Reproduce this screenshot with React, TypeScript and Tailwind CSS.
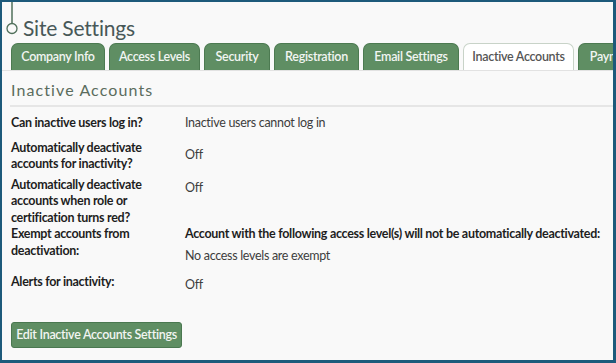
import React from 'react';

const tabs: { name: string; w: string }[] = [
  { name: 'Company Info', w: 'w-[94px]' },
  { name: 'Access Levels', w: 'w-[91px]' },
  { name: 'Security', w: 'w-[66px]' },
  { name: 'Registration', w: 'w-[85px]' },
  { name: 'Email Settings', w: 'w-[96px]' },
  { name: 'Inactive Accounts', w: 'w-[111px]' },
  { name: 'Payment', w: 'w-[70px]' },
];

const Row: React.FC<{ label: React.ReactNode; children: React.ReactNode; valueTop?: string; className?: string }> = ({
  label,
  children,
  valueTop = 'pt-[3px]',
  className = '',
}) => (
  <div className={`flex ${className}`}>
    <div className="w-[174px] shrink-0 font-bold text-[#1e1e1e] leading-[16.5px]">{label}</div>
    <div className={`text-[#3d3d3d] leading-[16px] ${valueTop}`}>{children}</div>
  </div>
);

export default function App() {
  return (
    <div className="relative w-[616px] h-[363px] overflow-hidden bg-[#f9f9f9] border-t-2 border-l-2 border-r-[3px] border-b-[3px] border-[#1d5a7b] font-['Lato',sans-serif] text-[12.5px] tracking-[-0.3px]">
      {/* timeline marker */}
      <svg className="absolute left-[3px] top-0" width="16" height="40" viewBox="0 0 16 40">
        <line x1="7" y1="0" x2="7" y2="21" stroke="#4f6f5a" strokeWidth="1.5" />
        <circle cx="7" cy="26.5" r="5" fill="none" stroke="#4f6f5a" strokeWidth="1.3" />
      </svg>

      <h1 className="pl-[21px] pt-[12px] text-[21px] leading-[28px] text-[#485858] tracking-[-0.2px]">Site Settings</h1>

      <div className="flex gap-[4px] pl-[9px] mt-[1px] border-b border-[#e2e2e2] whitespace-nowrap">
        {tabs.map((t) =>
          t.name === 'Inactive Accounts' ? (
            <div
              key={t.name}
              className={`${t.w} shrink-0 h-[27px] flex items-center justify-center rounded-t-[7px] border border-b-0 border-[#c8d3c8] bg-white text-[#555] font-semibold mb-[-1px]`}
            >
              {t.name}
            </div>
          ) : (
            <div
              key={t.name}
              className={`${t.w} shrink-0 h-[27px] flex items-center justify-center rounded-t-[7px] border border-b-0 border-[#4c7a51] bg-[#5f8e63] text-[#f2f5f2] font-semibold`}
            >
              {t.name}
            </div>
          ),
        )}
      </div>

      <h2 className="pl-[9px] pt-[9px] pb-[5px] text-[16px] leading-[20px] tracking-[1.1px] text-[#5b6c5d]">Inactive Accounts</h2>
      <div className="ml-[8px] h-[2px] bg-[#e6e6e6]" />

      <div className="pl-[9px] pt-[8px] flex flex-col">
        <Row label="Can inactive users log in?" valueTop="pt-0">
          Inactive users cannot log in
        </Row>
        <Row className="mt-[8px]" label={<>Automatically deactivate<br />accounts for inactivity?</>} valueTop="pt-[7px]">
          Off
        </Row>
        <Row className="mt-[4px]" label={<>Automatically deactivate<br />accounts when role or<br />certification turns red?</>}>
          Off
        </Row>
        <Row label={<>Exempt accounts from<br />deactivation:</>} valueTop="pt-0">
          <div className="font-bold text-[#1e1e1e] whitespace-nowrap">
            Account with the following access level(s) will not be automatically deactivated:
          </div>
          <div className="mt-[6px]">No access levels are exempt</div>
        </Row>
        <Row className="mt-[10px]" label="Alerts for inactivity:">
          Off
        </Row>
      </div>

      <div className="pl-[9px] pt-[29px]">
        <button className="h-[26px] w-[171px] rounded-[3px] border border-[#4a7850] bg-[#5f8e63] text-[#f2f5f2] font-semibold text-[12.5px] tracking-[-0.3px]">
          Edit Inactive Accounts Settings
        </button>
      </div>
    </div>
  );
}
